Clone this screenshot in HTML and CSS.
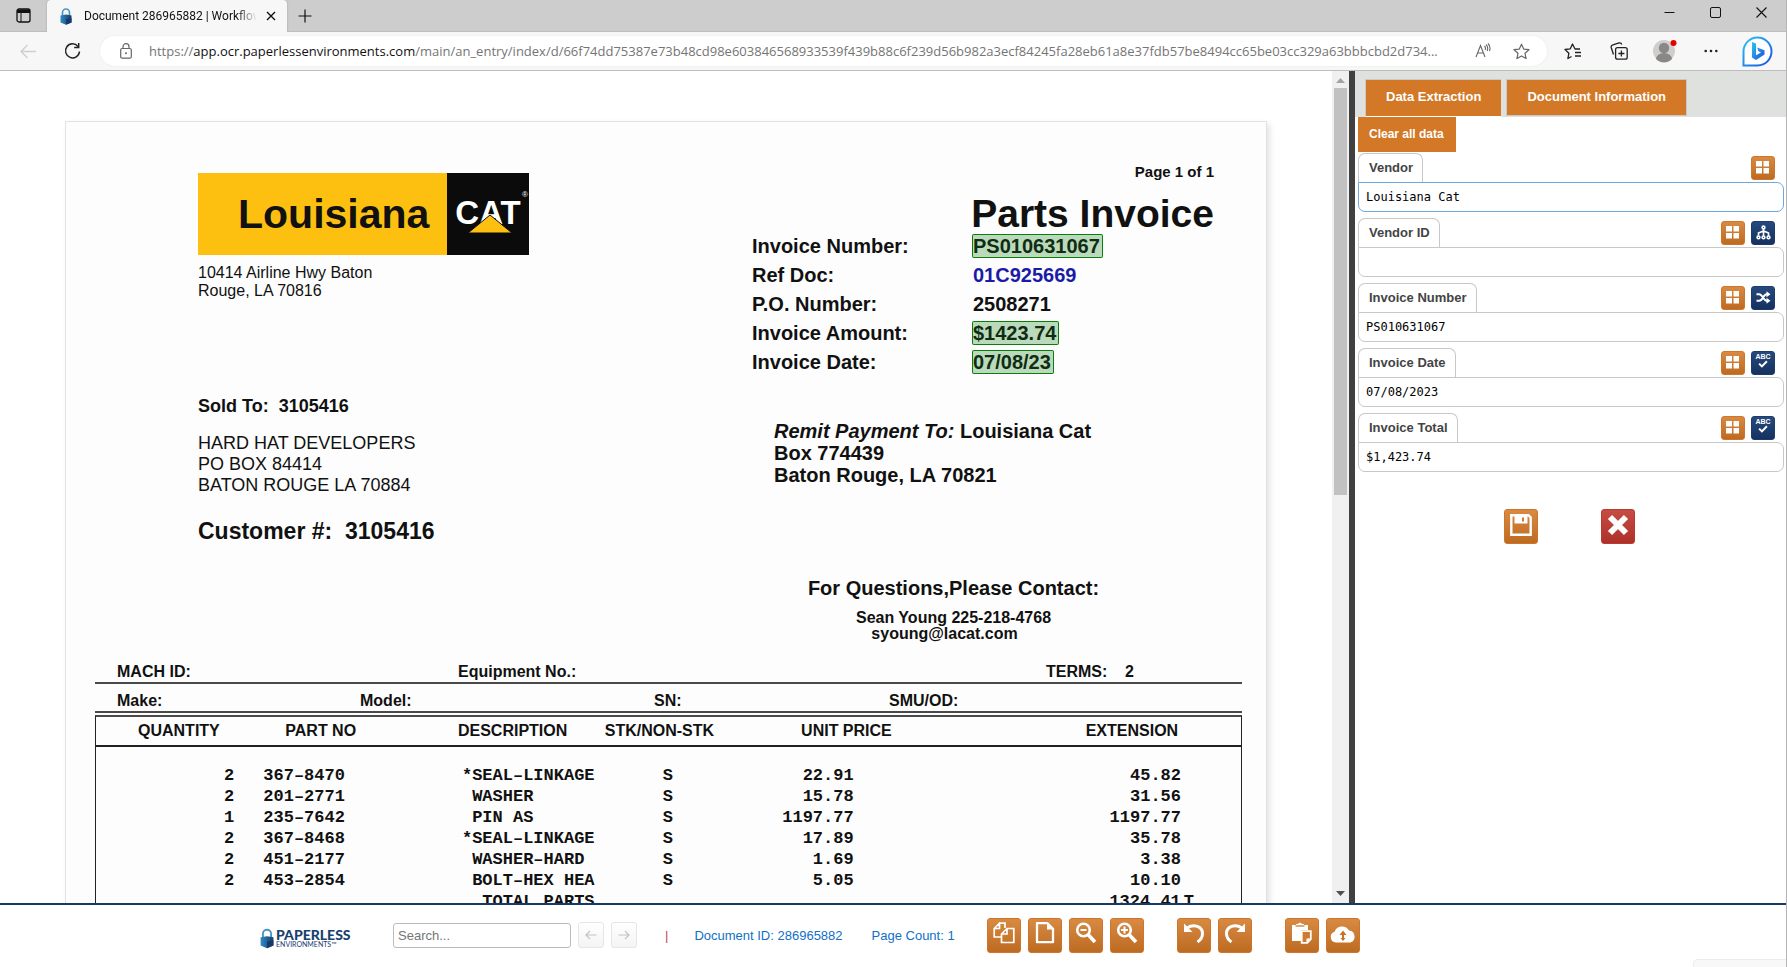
FILE: index.html
```html
<!DOCTYPE html>
<html lang="en">
<head>
<meta charset="utf-8">
<title>Document 286965882 | Workflow</title>
<link rel="stylesheet" href="styles.css">
</head>
<body>
<svg class="defs" aria-hidden="true">
  <defs>
    <linearGradient id="lockBlue" x1="0" y1="0" x2="1" y2="0"><stop offset="0" stop-color="#2f8cc4"/><stop offset="1" stop-color="#143a6b"/></linearGradient>
    <linearGradient id="bingBlue" x1="0" y1="0" x2="1" y2="1"><stop offset="0" stop-color="#2ec4f1"/><stop offset="1" stop-color="#1b4fe0"/></linearGradient>
  </defs>
  <symbol id="lock" viewBox="0 0 12 17">
    <path d="M2.5 9V4.5a3.5 3.5 0 0 1 7 0V9" fill="none" stroke="#4d93c0" stroke-width="1.6"/>
    <path d="M.5 7.500 6 6.500l5.500 1v7L6 16.800.5 14.500z" fill="url(#lockBlue)"/>
    <path d="M6 11l5.500-1v4.500L6 16.800z" fill="#143a6b"/>
  </symbol>
  <symbol id="grid" viewBox="0 0 14 13"><path d="M0 0h6v5.500H0zM7.500 0H13v5.500H7.500zM0 7h6v5.500H0zM7.500 7H13v5.500H7.500z" fill="#fff"/></symbol>
  <symbol id="tree" viewBox="0 0 14 14"><g fill="none" stroke="#fff" stroke-width="1.500"><circle cx="7" cy="2.300" r="1.300"/><path d="M7 4v6M2.300 10V7.500L7 5.500l4.700 2V10"/><circle cx="2.300" cy="11.500" r="1.300"/><circle cx="7" cy="11.500" r="1.300"/><circle cx="11.700" cy="11.500" r="1.300"/></g></symbol>
  <symbol id="shuffle" viewBox="0 0 14 13"><path d="M0 3.200h2.800c3.200 0 4.200 6.600 7.200 6.600h1M0 9.800h2.800c3.200 0 4.200-6.600 7.200-6.600h1" fill="none" stroke="#fff" stroke-width="2"/><path d="M10 .2l4 3-4 3zM10 6.800l4 3-4 3z" fill="#fff"/></symbol>
  <symbol id="tick" viewBox="0 0 9 7"><path d="M1 3.200l2.500 2.500L8 1" fill="none" stroke="#fff" stroke-width="1.800"/></symbol>
  <symbol id="save" viewBox="0 0 22 22"><path d="M1.300 1.300h17.200l2.200 2.200v17.200H1.300z" fill="none" stroke="#fff" stroke-width="2.400"/><path d="M4.500 1.500h13v8h-13z" fill="#fff"/><path d="M12 3.500h2v4h-2z" fill="#cf7a30"/></symbol>
  <symbol id="cross" viewBox="0 0 22 22"><path d="M3 3l16 16M19 3L3 19" fill="none" stroke="#fff" stroke-width="6"/></symbol>
  <symbol id="copy" viewBox="0 0 22 22"><path d="M6.500 1.200H12V6M8 15H1.200V6.500l5.300-5.300v5.300H1.200M14 6.500h6.800v14H8.500V12zM14 6.500V12H8.500" fill="none" stroke="#fff" stroke-width="1.700"/></symbol>
  <symbol id="file" viewBox="0 0 22 22"><path d="M3 1.200h10.500L19 6.700v13.500H3z" fill="none" stroke="#fff" stroke-width="2.300" stroke-linejoin="round"/><path d="M13 1v6.500h6z" fill="#fff"/></symbol>
  <symbol id="minus" viewBox="0 0 22 22"><circle cx="8.500" cy="8" r="6.300" fill="none" stroke="#fff" stroke-width="2.600"/><path d="M5.500 8h6" stroke="#fff" stroke-width="2"/><path d="M13 12.500l7 7.500" stroke="#fff" stroke-width="3.600"/></symbol>
  <symbol id="plus" viewBox="0 0 22 22"><circle cx="8.500" cy="8" r="6.300" fill="none" stroke="#fff" stroke-width="2.600"/><path d="M5 8h7M8.500 4.500v7" stroke="#fff" stroke-width="2"/><path d="M13 12.500l7 7.500" stroke="#fff" stroke-width="3.600"/></symbol>
  <symbol id="undo" viewBox="0 0 22 22"><path d="M4 6c7-4.500 15.500-1.500 15.500 5.500 0 4-2 6.500-5 8.500" fill="none" stroke="#fff" stroke-width="3"/><path d="M1 1.500V10h8.500z" fill="#fff"/></symbol>
  <symbol id="redo" viewBox="0 0 22 22"><path d="M18 6C11 1.500 2.500 4.500 2.500 11.500c0 4 2 6.500 5 8.500" fill="none" stroke="#fff" stroke-width="3"/><path d="M21 1.500V10h-8.500z" fill="#fff"/></symbol>
  <symbol id="paste" viewBox="0 0 22 22"><path d="M1 3h4V2h2a2.300 2.300 0 0 1 4 0h2v1h4v5h-7v11H1z" fill="#fff"/><path d="M4.500 4h9" stroke="#cf7a30" stroke-width="1.300"/><path d="M10.700 9.200h9.100v8l-3.500 3.600h-5.600z" fill="#cf7a30" stroke="#fff" stroke-width="1.800"/><path d="M15.500 21v-4.500H20z" fill="#fff"/></symbol>
  <symbol id="cloud" viewBox="0 0 26 22"><path d="M6 20.500a5.500 5.500 0 0 1-1.500-10.700A8 8 0 0 1 19 8.500a6.200 6.200 0 0 1 1.500 12z" fill="#fff"/><path d="M13 10v8" stroke="#c67229" stroke-width="2"/><path d="M13 8.500l3.500 4.500h-7zM13 19l2.500-3h-5z" fill="#c67229"/></symbol>
</svg>

<div class="window">
  <div class="tabstrip">
    <button class="slot tab-menu" aria-label="Tab actions"><svg width="15" height="15" viewBox="0 0 15 15"><rect x="1" y="1" width="13" height="13" rx="2" fill="none" stroke="#111" stroke-width="1.300"/><path d="M1 1.500h13V5H1z" fill="#111"/><path d="M5 5v9" stroke="#111"/></svg></button>
    <div class="tab">
      <svg class="favicon"><use href="#lock"/></svg>
      <span class="tab-title">Document 286965882 | Workflow</span>
      <button class="tab-close" aria-label="Close tab"><svg width="10" height="10" viewBox="0 0 10 10"><path d="M1 1l8 8M9 1L1 9" stroke="#111" stroke-width="1.400"/></svg></button>
    </div>
    <button class="new-tab" aria-label="New tab"><svg width="14" height="14" viewBox="0 0 14 14"><path d="M7 .5v13M.5 7h13" stroke="#111" stroke-width="1.200"/></svg></button>
    <div class="window-controls">
      <button class="control" aria-label="Minimize"><svg width="11" height="11" viewBox="0 0 11 11"><path d="M.5 5.500h10" stroke="#111"/></svg></button>
      <button class="control" aria-label="Maximize"><svg width="11" height="11" viewBox="0 0 11 11"><rect x=".5" y=".5" width="10" height="10" rx="1.500" fill="none" stroke="#111"/></svg></button>
      <button class="control" aria-label="Close"><svg width="11" height="11" viewBox="0 0 11 11"><path d="M.5.5l10 10M10.500.5l-10 10" stroke="#111" stroke-width="1.100"/></svg></button>
    </div>
  </div>

  <div class="toolbar">
    <button class="nav" aria-label="Back"><svg width="17" height="15" viewBox="0 0 17 15"><path d="M16 7.500H1.500M7.500 1L1 7.500 7.500 14" fill="none" stroke="#cfcfcf" stroke-width="1.300"/></svg></button>
    <button class="nav" aria-label="Refresh"><svg width="17" height="18" viewBox="0 0 17 18"><path d="M15.500 9.500A7 7 0 1 1 14 4.500" fill="none" stroke="#222" stroke-width="1.500"/><path d="M14.700 1v4.500h-4.500" fill="none" stroke="#222" stroke-width="1.500"/></svg></button>
    <div class="address">
      <svg width="12" height="16" viewBox="0 0 12 16"><rect x=".7" y="5.500" width="10.600" height="9.700" rx="1.500" fill="none" stroke="#666" stroke-width="1.200"/><path d="M3 5.500V3.700a3 3 0 0 1 6 0v1.800" fill="none" stroke="#666" stroke-width="1.200"/><circle cx="6" cy="10.300" r="1" fill="#666"/></svg>
      <span class="url">https://<span class="host">app.ocr.paperlessenvironments.com</span>/main/an_entry/index/d/66f74dd75387e73b48cd98e603846568933539f439b88c6f239d56b982a3ecf84245fa28eb61a8e37fdb57be8494cc65be03cc329a63bbbcbd2d734...</span>
      <button class="address-btn" aria-label="Read aloud"><svg width="16" height="16" viewBox="0 0 16 16"><path d="M1 14L5.500 2.500 10 14M2.700 10h5.600M9.500 3c1 1 1.200 2.500.7 4M11 1.500c1.800 1.600 2 4 1.200 6.500M13 .5c2 2 2.400 4.800 1.500 7.500" fill="none" stroke="#666" stroke-width="1.100"/></svg></button>
      <button class="address-btn" aria-label="Add to favorites"><svg width="17" height="17" viewBox="0 0 17 17"><path d="M8.500 1.200l2.200 4.900 5.300.6-4 3.600 1.100 5.300-4.600-2.700-4.600 2.700L5 10.300 1 6.700l5.300-.6z" fill="none" stroke="#666" stroke-width="1.200" stroke-linejoin="round"/></svg></button>
    </div>
    <div class="tools">
      <button class="tool" aria-label="Favorites"><svg width="18" height="17" viewBox="0 0 18 17"><path d="M16 6h-5L8.500 1 6.300 5.800 1 6.500l3.900 3.700-1 5.300 3.600-2" fill="none" stroke="#222" stroke-width="1.300" stroke-linejoin="round"/><path d="M11 9.500h6M11 13h6" stroke="#222" stroke-width="1.300"/></svg></button>
      <button class="tool" aria-label="Collections"><svg width="18" height="18" viewBox="0 0 18 18"><path d="M3.500 12.500L1.200 5.500C.8 4 1.500 3.300 3 2.800l6-1.800c1.500-.3 2.400.2 2.800 1.500" fill="none" stroke="#222" stroke-width="1.300"/><rect x="5.600" y="5.600" width="11.600" height="11.600" rx="2" fill="none" stroke="#222" stroke-width="1.300"/><path d="M11.400 8.500v6M8.400 11.500h6" stroke="#222" stroke-width="1.300"/></svg></button>
      <button class="tool" aria-label="Profile"><svg width="26" height="26" viewBox="0 0 26 26"><circle cx="12" cy="13" r="11" fill="#d0cecc"/><circle cx="12" cy="10" r="5.200" fill="#8a8886"/><path d="M4 21a8 6 0 0 1 16 0 11 11 0 0 1-16 0z" fill="#8a8886"/><circle cx="21.500" cy="5" r="3" fill="#e60000"/></svg></button>
      <button class="tool" aria-label="Settings and more"><svg width="14" height="4" viewBox="0 0 14 4"><circle cx="1.700" cy="2" r="1.300" fill="#222"/><circle cx="7" cy="2" r="1.300" fill="#222"/><circle cx="12.300" cy="2" r="1.300" fill="#222"/></svg></button>
      <button class="tool" aria-label="Bing"><svg width="31" height="31" viewBox="0 0 31 31"><path d="M1.500 29.500V15.500a14 14 0 1 1 14 14z" fill="#fff" stroke="url(#bingBlue)" stroke-width="2"/><path d="M10 6l4 1.400v11.800L19 16.500l-2.500-1.200-1.500-3.800 7.500 2.700v4.300L14 24l-4-2.400z" fill="url(#bingBlue)"/></svg></button>
    </div>
  </div>

  <div class="app">
    <main class="workspace">
      <section class="viewer">
        <article class="sheet">
          <div class="sheet-top">
            <div class="sender">
              <div class="brand">
                <span class="brand-name">Louisiana</span>
                <span class="brand-cat">CAT<svg class="brand-peak" viewBox="0 0 44 18"><path d="M0 18L22 0l22 18z" fill="#fdc010" stroke="#0b0b0b" stroke-width="1"/></svg><small class="brand-mark">®</small></span>
              </div>
              <p class="sender-address">10414 Airline Hwy Baton<br>Rouge, LA 70816</p>
              <p class="sold-to">Sold To:&nbsp; 3105416</p>
              <p class="buyer">HARD HAT DEVELOPERS<br>PO BOX 84414<br>BATON ROUGE LA 70884</p>
              <p class="customer">Customer #:&nbsp; 3105416</p>
            </div>
            <div class="summary">
              <p class="page-no">Page 1 of 1</p>
              <h1 class="doc-title">Parts Invoice</h1>
              <dl class="facts">
                <dt>Invoice Number:</dt><dd><mark>PS010631067</mark></dd>
                <dt>Ref Doc:</dt><dd class="ref">01C925669</dd>
                <dt>P.O. Number:</dt><dd>2508271</dd>
                <dt>Invoice Amount:</dt><dd><mark>$1423.74</mark></dd>
                <dt>Invoice Date:</dt><dd><mark>07/08/23</mark></dd>
              </dl>
              <p class="remit"><em>Remit Payment To:</em> Louisiana Cat<br>Box 774439<br>Baton Rouge, LA 70821</p>
              <div class="contact">
                <p class="contact-head">For Questions,Please Contact:</p>
                <p class="contact-line">Sean Young 225-218-4768</p>
                <p class="contact-line contact-mail">syoung@lacat.com</p>
              </div>
            </div>
          </div>
          <div class="sheet-lines">
            <div class="machine machine-a"><span>MACH ID:</span><span>Equipment No.:</span><span>TERMS: &nbsp;&nbsp; 2</span></div>
            <div class="machine machine-b"><span>Make:</span><span>Model:</span><span>SN:</span><span>SMU/OD:</span></div>
            <table class="parts">
              <colgroup><col class="c-qty"><col class="c-part"><col class="c-desc"><col class="c-stk"><col class="c-unit"><col class="c-ext"></colgroup>
              <thead><tr><th class="qty">QUANTITY</th><th class="part">PART NO</th><th class="desc">DESCRIPTION</th><th class="stk">STK/NON-STK</th><th class="unit">UNIT PRICE</th><th class="ext">EXTENSION</th></tr></thead>
              <tbody>
                <tr><td class="qty">2</td><td class="part">367–8470</td><td class="desc">*SEAL–LINKAGE</td><td class="stk">S</td><td class="unit">22.91</td><td class="ext">45.82</td></tr>
                <tr><td class="qty">2</td><td class="part">201–2771</td><td class="desc"> WASHER</td><td class="stk">S</td><td class="unit">15.78</td><td class="ext">31.56</td></tr>
                <tr><td class="qty">1</td><td class="part">235–7642</td><td class="desc"> PIN AS</td><td class="stk">S</td><td class="unit">1197.77</td><td class="ext">1197.77</td></tr>
                <tr><td class="qty">2</td><td class="part">367–8468</td><td class="desc">*SEAL–LINKAGE</td><td class="stk">S</td><td class="unit">17.89</td><td class="ext">35.78</td></tr>
                <tr><td class="qty">2</td><td class="part">451–2177</td><td class="desc"> WASHER–HARD</td><td class="stk">S</td><td class="unit">1.69</td><td class="ext">3.38</td></tr>
                <tr><td class="qty">2</td><td class="part">453–2854</td><td class="desc"> BOLT–HEX HEA</td><td class="stk">S</td><td class="unit">5.05</td><td class="ext">10.10</td></tr>
                <tr><td class="qty"></td><td></td><td class="desc">  TOTAL PARTS</td><td class="stk"></td><td class="unit"></td><td class="ext total">1324.41<span class="tax">T</span></td></tr>
              </tbody>
            </table>
          </div>
        </article>
      </section>
      <div class="scrollbar">
        <svg width="9" height="5" viewBox="0 0 9 5"><path d="M0 5l4.500-5L9 5z" fill="#a3a3a3"/></svg>
        <div class="track"><div class="thumb"></div></div>
        <svg width="9" height="5" viewBox="0 0 9 5"><path d="M0 0l4.500 5L9 0z" fill="#505050"/></svg>
      </div>
      <div class="splitter"></div>
      <aside class="panel">
        <nav class="panel-tabs">
          <button class="panel-tab is-active">Data Extraction</button>
          <button class="panel-tab">Document Information</button>
        </nav>
        <form class="fields">
          <button type="button" class="clear">Clear all data</button>
          <div class="field">
            <div class="field-head"><label for="vendor">Vendor</label><button type="button" class="mini" aria-label="Pick vendor"><svg width="14" height="13"><use href="#grid"/></svg></button></div>
            <input id="vendor" class="is-focus" type="text" value="Louisiana Cat">
          </div>
          <div class="field">
            <div class="field-head"><label for="vendor-id">Vendor ID</label><button type="button" class="mini" aria-label="Pick vendor ID"><svg width="14" height="13"><use href="#grid"/></svg></button><button type="button" class="mini navy" aria-label="Look up"><svg width="15" height="15"><use href="#tree"/></svg></button></div>
            <input id="vendor-id" type="text" value="">
          </div>
          <div class="field">
            <div class="field-head"><label for="inv-no">Invoice Number</label><button type="button" class="mini" aria-label="Pick invoice number"><svg width="14" height="13"><use href="#grid"/></svg></button><button type="button" class="mini navy" aria-label="Shuffle"><svg width="15" height="13"><use href="#shuffle"/></svg></button></div>
            <input id="inv-no" type="text" value="PS010631067">
          </div>
          <div class="field">
            <div class="field-head"><label for="inv-date">Invoice Date</label><button type="button" class="mini" aria-label="Pick invoice date"><svg width="14" height="13"><use href="#grid"/></svg></button><button type="button" class="mini navy spell"><span>ABC</span><svg width="10" height="8"><use href="#tick"/></svg></button></div>
            <input id="inv-date" type="text" value="07/08/2023">
          </div>
          <div class="field">
            <div class="field-head"><label for="inv-total">Invoice Total</label><button type="button" class="mini" aria-label="Pick invoice total"><svg width="14" height="13"><use href="#grid"/></svg></button><button type="button" class="mini navy spell"><span>ABC</span><svg width="10" height="8"><use href="#tick"/></svg></button></div>
            <input id="inv-total" type="text" value="$1,423.74">
          </div>
          <div class="actions">
            <button type="button" class="big" aria-label="Save"><svg width="22" height="22"><use href="#save"/></svg></button>
            <button type="button" class="big red" aria-label="Cancel"><svg width="22" height="22"><use href="#cross"/></svg></button>
          </div>
        </form>
      </aside>
    </main>

    <footer class="bottom">
      <div class="product">
        <svg class="product-lock"><use href="#lock"/></svg>
        <div class="product-text"><span class="product-name">PAPERLESS</span><span class="product-sub">ENVIRONMENTS™</span></div>
      </div>
      <input class="search" type="text" placeholder="Search..." aria-label="Search">
      <button class="step" aria-label="Previous"><svg width="12" height="10" viewBox="0 0 12 10"><path d="M11.500 5H1M5 1L1 5l4 4" fill="none" stroke="#c4c4c4" stroke-width="1.200"/></svg></button>
      <button class="step" aria-label="Next"><svg width="12" height="10" viewBox="0 0 12 10"><path d="M.5 5H11M7 1l4 4-4 4" fill="none" stroke="#c4c4c4" stroke-width="1.200"/></svg></button>
      <span class="bar">|</span>
      <span class="info doc-id">Document ID: 286965882</span>
      <span class="info">Page Count: 1</span>
      <div class="commands">
        <div class="command-group">
          <button class="big" aria-label="Copy pages"><svg width="22" height="22"><use href="#copy"/></svg></button>
          <button class="big" aria-label="Single page"><svg width="22" height="22"><use href="#file"/></svg></button>
          <button class="big" aria-label="Zoom out"><svg width="22" height="22"><use href="#minus"/></svg></button>
          <button class="big" aria-label="Zoom in"><svg width="22" height="22"><use href="#plus"/></svg></button>
        </div>
        <div class="command-group">
          <button class="big" aria-label="Rotate left"><svg width="22" height="22"><use href="#undo"/></svg></button>
          <button class="big" aria-label="Rotate right"><svg width="22" height="22"><use href="#redo"/></svg></button>
        </div>
        <div class="command-group">
          <button class="big" aria-label="Paste"><svg width="22" height="22"><use href="#paste"/></svg></button>
          <button class="big" aria-label="Upload"><svg width="26" height="22"><use href="#cloud"/></svg></button>
        </div>
      </div>
      <div class="status-corner"></div>
    </footer>
  </div>
</div>
</body>
</html>
```
FILE: styles.css
```css
* { box-sizing: border-box; }

body {
  margin: 0;
  font-family: "Liberation Sans", Arial, sans-serif;
  font-size: 13px;
  color: #111;
  background: #fff;
}

p, h1, dl, dd { margin: 0; }

button {
  padding: 0;
  border: 0;
  background: none;
  font: inherit;
  color: inherit;
  display: flex;
  align-items: center;
  justify-content: center;
}

.defs { position: absolute; width: 0; height: 0; }

.window {
  height: 100vh;
  display: flex;
  flex-direction: column;
  overflow: hidden;
  border-right: 1px solid #b5b5b5;
}

/* tab strip */
.tabstrip {
  flex: none;
  height: 32px;
  display: flex;
  background: #cdcdcd;
  border-bottom: 1px solid #bdbdbd;
}

.slot { width: 47px; height: 31px; }

.tab {
  width: 240px;
  height: 32px;
  display: flex;
  align-items: center;
  padding: 0 11px 0 13px;
  background: #f7f7f7;
  border-radius: 4px 4px 0 0;
  box-shadow: 0 0 2px #9a9a9a;
  clip-path: inset(0 -3px 0 -3px);
}

.favicon { width: 12px; height: 17px; margin-right: 12px; flex: none; }

.tab-title {
  flex: 1;
  overflow: hidden;
  white-space: nowrap;
  font: 12px/18px Roboto, "Noto Sans", sans-serif;
  -webkit-mask-image: linear-gradient(90deg, #000 88%, transparent);
  mask-image: linear-gradient(90deg, #000 88%, transparent);
}

.tab-close { flex: none; margin-left: 9px; height: 18px; }
.new-tab { width: 36px; height: 31px; }
.window-controls { margin-left: auto; padding-right: 2px; display: flex; }
.control { width: 46px; height: 24px; }

/* address bar */
.toolbar {
  flex: none;
  height: 39px;
  display: flex;
  align-items: center;
  padding: 0 6px;
  background: #f7f7f7;
  border-bottom: 1px solid #bdbdbd;
}

.nav { width: 44px; height: 32px; }

.address {
  flex: 1;
  min-width: 0;
  height: 30px;
  margin: 0 3px 0 6px;
  padding: 0 6px 0 20px;
  display: flex;
  align-items: center;
  background: #fff;
  border-radius: 15px;
  box-shadow: 0 0 2px #e4e4e4;
}

.url {
  flex: 1;
  min-width: 0;
  margin-left: 17px;
  overflow: hidden;
  white-space: nowrap;
  font: 13px/20px "Open Sans", "Noto Sans", sans-serif;
  color: #757575;
}

.host { color: #111; }
.address-btn { flex: none; width: 39px; height: 30px; }
.tools { display: flex; }
.tool { width: 46px; height: 34px; }

/* application */
.app { flex: 1; min-height: 0; display: flex; flex-direction: column; }
.workspace { flex: 1; min-height: 0; display: flex; }

.viewer {
  flex: 1;
  min-width: 0;
  overflow: hidden;
  padding: 50px 65px 0;
}

.sheet {
  padding: 41px 24px 90px 29px;
  background: #fdfdfd;
  border: 1px solid #e1e2e1;
  box-shadow: 3px 3px 6px #e4e4e4;
}

.sheet-top {
  display: flex;
  justify-content: space-between;
  padding: 0 28px 0 103px;
}

.brand {
  width: 331px;
  height: 82px;
  margin-top: 10px;
  display: flex;
  background: #fdc010;
}

.brand-name {
  flex: 1;
  padding-left: 40px;
  font: bold 41px/82px "Liberation Sans", sans-serif;
}

.brand-cat {
  position: relative;
  width: 82px;
  text-align: center;
  background: #0b0b0b;
  color: #fff;
  font: bold 33px/80px "Liberation Sans", sans-serif;
}

.brand-peak { position: absolute; left: 21px; bottom: 22px; width: 44px; height: 18px; }
.brand-mark { position: absolute; right: 1px; top: 18px; font: 8px/8px "Liberation Sans", sans-serif; }

.sender-address { margin-top: 9px; font-size: 16px; line-height: 18px; }
.sold-to { margin-top: 96px; font-size: 18px; line-height: 21px; font-weight: bold; }
.buyer { margin-top: 16px; font-size: 18px; line-height: 21px; }
.customer { margin-top: 22px; font-size: 23px; line-height: 26px; font-weight: bold; }

.summary { width: 462px; font-weight: bold; }
.page-no { text-align: right; font-size: 15px; line-height: 18px; }
.doc-title { margin-top: 14px; text-align: right; font-size: 39px; line-height: 38px; }

.facts {
  margin-top: 2px;
  display: grid;
  grid-template-columns: 221px 1fr;
  row-gap: 7px;
  font-size: 20px;
  line-height: 22px;
}

.facts .ref { color: #1b1ba8; }

mark {
  background: rgba(0, 120, 0, 0.26);
  color: #0f2d12;
  box-shadow: 0 0 0 1px #0b7d0b;
  border-radius: 1px;
  padding-right: 2px;
}

.remit { margin: 47px 0 0 22px; font-size: 20px; line-height: 22px; }
.contact { margin: 90px 59px 0 0; text-align: center; }
.contact-head { margin-bottom: 10px; font-size: 20px; line-height: 24px; }
.contact-line { font-size: 16px; line-height: 16px; }
.contact-mail { padding-right: 18px; }

.sheet-lines { margin-top: 20px; font-weight: bold; }

.machine {
  display: grid;
  padding-left: 22px;
  font-size: 16px;
  line-height: 20px;
  border-bottom: 2px solid #4a4a4a;
}

.machine-a { grid-template-columns: 341fr 588fr 196fr; }
.machine-b { grid-template-columns: 243fr 294fr 235fr 353fr; padding-top: 7px; margin-bottom: 2px; }

.parts {
  width: 100%;
  table-layout: fixed;
  border-collapse: separate;
  border-spacing: 0;
  border: 1px solid #222;
  border-top: 2px solid #4a4a4a;
}

.c-qty { width: 14%; }
.c-part { width: 17%; }
.c-desc { width: 13%; }
.c-stk { width: 14%; }
.c-unit { width: 28%; }
.c-ext { width: 14%; }

.parts th {
  height: 30px;
  padding: 0;
  text-align: left;
  font-size: 16px;
  line-height: 20px;
  border-bottom: 2px solid #222;
}

.parts th.qty { padding-left: 42px; }
.parts th.part { padding-left: 29px; }
.parts th.desc { padding-left: 7px; }
.parts th.stk { padding-left: 5px; }
.parts th.unit { padding-left: 41px; }
.parts th.ext { padding-left: 5px; }

.parts td {
  padding: 0;
  font: bold 17px/21px "Liberation Mono", monospace;
  white-space: pre;
}

.parts tbody tr:first-child td { padding-top: 18px; }
.parts td.qty { text-align: right; padding-right: 22px; }
.parts td.part { padding-left: 7px; }
.parts td.desc { padding-left: 11px; }
.parts td.stk { padding-left: 63px; }
.parts td.unit { text-align: right; padding-right: 227px; }
.parts td.ext { text-align: right; padding-right: 60px; }
.parts td.total { padding-right: 47px; }
.tax { margin-left: 3px; }

.scrollbar {
  flex: none;
  width: 17px;
  display: flex;
  flex-direction: column;
  align-items: center;
  padding: 7px 0;
  background: #f0f0f0;
}

.track { flex: 1; width: 13px; padding: 5px 0; }
.thumb { height: 51%; background: #c1c1c1; }
.splitter { flex: none; width: 6px; background: #404040; }

/* data panel */
.panel { flex: none; width: 431px; background: #fff; }

.panel-tabs {
  display: flex;
  align-items: flex-start;
  gap: 5px;
  height: 46px;
  padding: 8px 10px 0;
  background: #dfe1de;
}

.panel-tab {
  height: 37px;
  padding: 0 20px 3px;
  background: #d37827;
  border: 1px solid #c9c9c9;
  color: #fff;
  font-weight: bold;
}

.panel-tab.is-active { height: 38px; border-right: 0; border-bottom-color: #fff; }

.fields { padding: 0 2px 0 3px; }

.clear {
  height: 35px;
  margin-bottom: 1px;
  padding: 0 12px 1px 11px;
  background: #d37827;
  color: #fff;
  font-size: 12px;
  font-weight: bold;
}

.field { margin-bottom: 6px; }
.field-head { display: flex; align-items: center; gap: 6px; height: 29px; padding-right: 9px; }

.field-head label {
  align-self: stretch;
  margin-right: auto;
  padding: 0 9px 0 10px;
  border: 1px solid #c8c8c8;
  border-bottom: 0;
  border-radius: 7px 7px 0 0;
  font-weight: bold;
  line-height: 28px;
  color: #444;
}

.field input {
  display: block;
  width: 100%;
  height: 30px;
  padding: 0 7px;
  border: 1px solid #c8c8c8;
  border-radius: 0 7px 7px 7px;
  font: 12px "DejaVu Sans Mono", monospace;
  color: #000;
  outline: 0;
}

.field input.is-focus { border-color: #6fa8dc; }

.mini {
  width: 24px;
  height: 24px;
  padding-bottom: 1px;
  border: 1px solid #d0752a;
  border-radius: 3px;
  background: linear-gradient(#d88a43, #bd6b21);
}

.mini.navy { border-color: #1c3c6e; background: linear-gradient(#27497d, #15315f); }
.spell { flex-direction: column; padding-bottom: 4px; color: #fff; font: bold 7px/7px "Liberation Sans", sans-serif; }

.actions { display: flex; justify-content: center; gap: 63px; padding: 31px 3px 0 0; }

.big {
  width: 34px;
  height: 35px;
  padding-bottom: 4px;
  border: 1px solid #cf7529;
  border-radius: 3px;
  background: linear-gradient(#d88a43, #bd6b21);
}

.big.red { border-color: #b93a32; background: linear-gradient(#c64d43, #ad3129); }

/* bottom bar */
.bottom {
  position: relative;
  flex: none;
  height: 64px;
  display: flex;
  align-items: center;
  padding: 0 0 2px 260px;
  border-top: 2px solid #173a6b;
  background: #fff;
}

.product { display: flex; align-items: center; gap: 2px; width: 133px; padding-top: 6px; }
.product-lock { width: 14px; height: 21px; }
.product-text { display: flex; flex-direction: column; color: #17406f; font-family: Lato, sans-serif; }
.product-name { font-size: 14px; line-height: 13px; font-weight: 900; }
.product-sub { font-size: 7px; line-height: 7px; }

.search {
  width: 178px;
  height: 25px;
  padding: 0 4px;
  border: 1px solid #bbb;
  border-radius: 3px;
  font: 13px "Liberation Sans", sans-serif;
}

.search::placeholder { color: #757575; }

.step {
  width: 26px;
  height: 26px;
  margin-left: 7px;
  border: 1px solid #e6e6e6;
  border-radius: 3px;
  background: linear-gradient(#fff, #f4f4f4);
}

.bar { margin: 0 26px 0 28px; color: #c0504a; }
.info { color: #1070c8; }
.doc-id { margin-right: 29px; }
.commands { display: flex; gap: 33px; margin-left: 32px; }
.command-group { display: flex; gap: 7px; }

.status-corner {
  position: absolute;
  right: 0;
  bottom: 0;
  width: 93px;
  height: 8px;
  background: #f8f8f8;
  border: 1px solid #ececec;
  border-width: 1px 0 0 1px;
  border-radius: 5px 0 0 0;
}
```
